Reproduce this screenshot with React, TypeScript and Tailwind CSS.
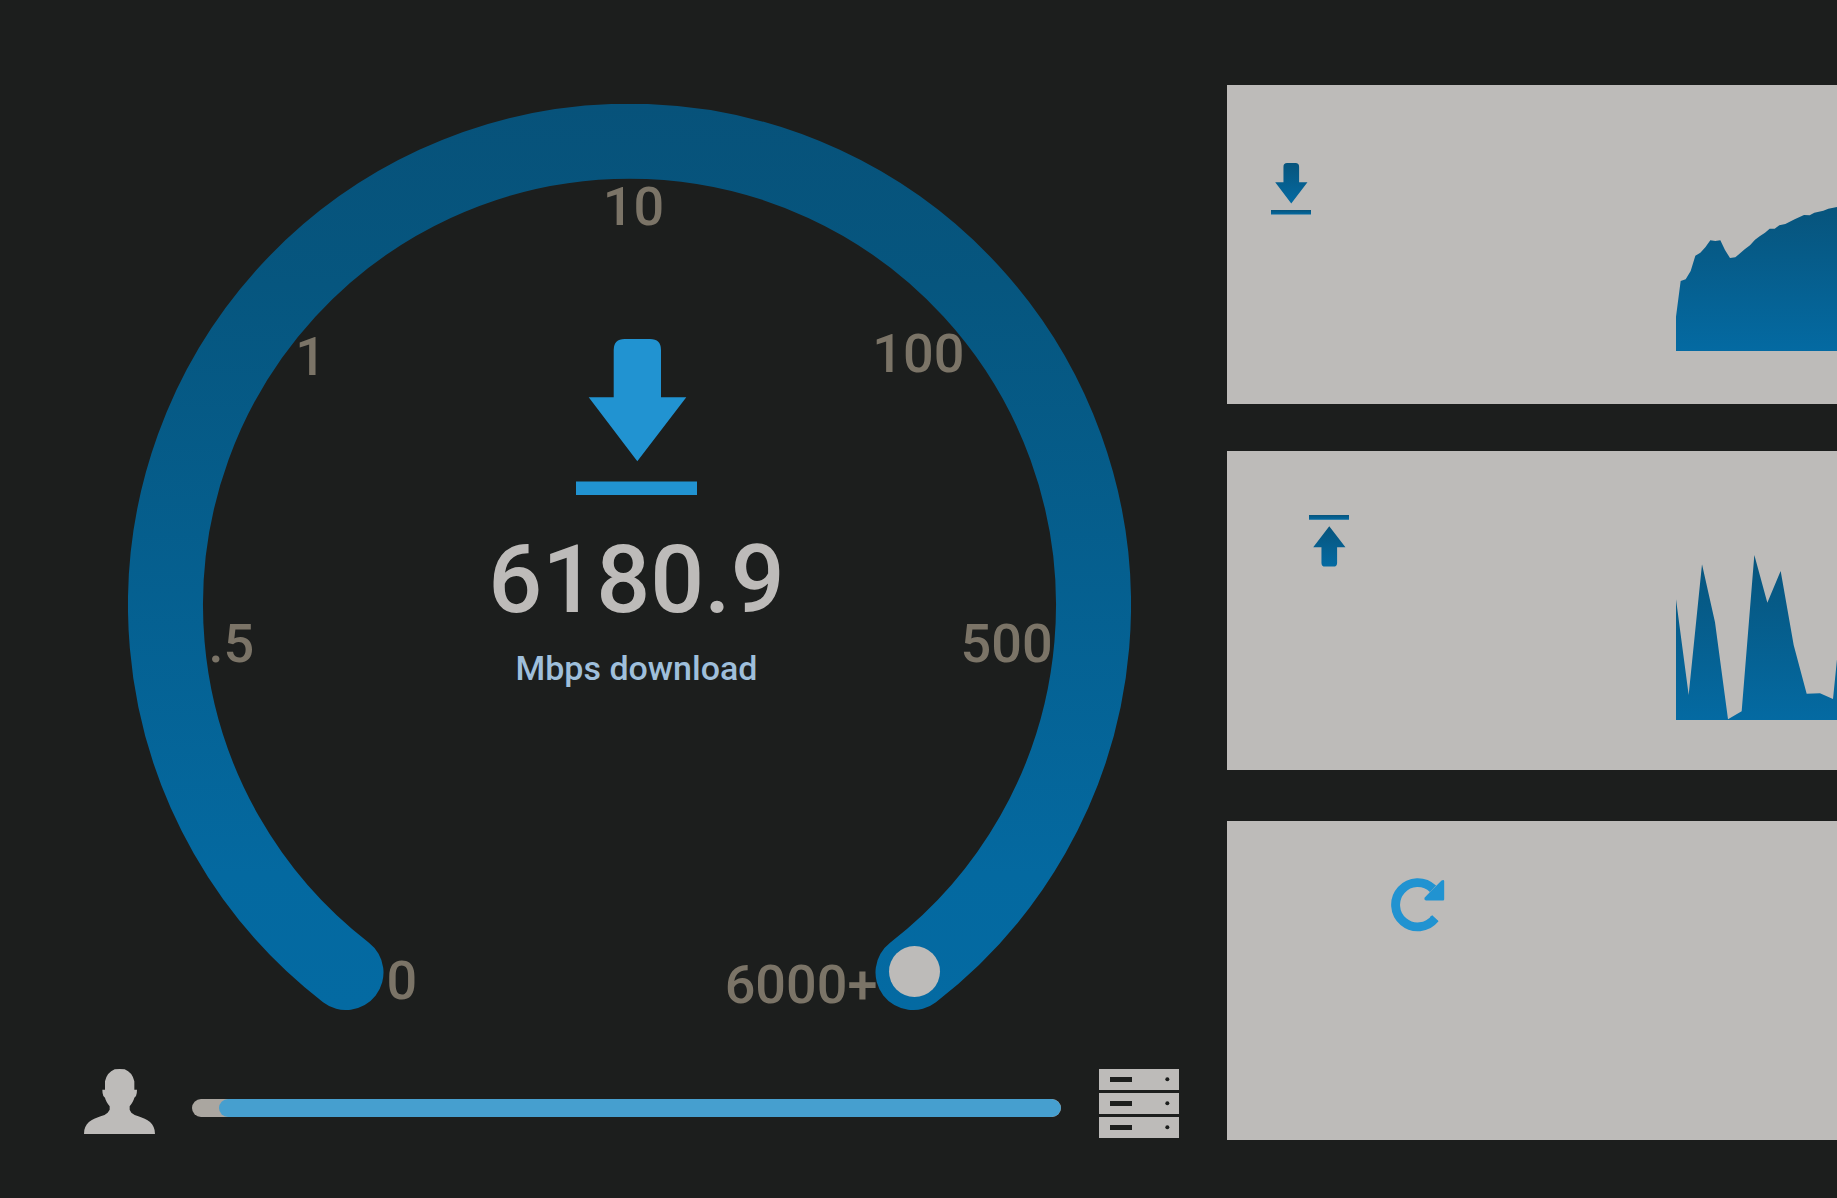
import React from "react";

type ArrowProps = { className: string; gradient?: string };

function ArrowIcon({ className, gradient }: ArrowProps) {
  const fill = gradient ? `url(#${gradient})` : "#2193d1";
  return (
    <svg viewBox="0 0 121 156" className={className} aria-hidden="true">
      {gradient && (
        <defs>
          <linearGradient id={gradient} x1="0" y1="0" x2="0" y2="1">
            <stop offset="0" stopColor="#07547c" />
            <stop offset="1" stopColor="#046aa2" />
          </linearGradient>
        </defs>
      )}
      <path
        d="M37.7 58.3V11Q37.7 0 48.7 0H74Q85 0 85 11V58.3H110.3L61.3 122.3L12.7 58.3Z"
        fill={fill}
      />
      <path d="M0 142.5H121V156H0Z" fill={fill} />
    </svg>
  );
}

function UploadIcon() {
  return (
    <svg viewBox="0 0 121 156" className="w-[40px]" aria-hidden="true">
      <defs>
        <linearGradient id="upload-icon" x1="0" y1="0" x2="0" y2="1">
          <stop offset="0" stopColor="#07547c" />
          <stop offset="1" stopColor="#046aa2" />
        </linearGradient>
      </defs>
      <path
        d="M37.7 97.7V145Q37.7 156 48.7 156H74Q85 156 85 145V97.7H110.3L61.3 33.7L12.7 97.7Z"
        fill="url(#upload-icon)"
      />
      <path d="M0 0H121V14H0Z" fill="url(#upload-icon)" />
    </svg>
  );
}

function RetryIcon() {
  return (
    <svg viewBox="0 0 54 54" className="size-[54px]" aria-hidden="true">
      <path
        d="M44 40.5A22.1 22.1 0 1 1 42 10.8"
        fill="none"
        stroke="#2193d1"
        strokeWidth="8.9"
      />
      <path
        d="M44.8 8.2L50.6 2.6Q53 1.2 53.2 3.4V21.2Q53.2 22.4 52 22.4H35Q32.4 21.6 34 19.2L39 14Z"
        fill="#2193d1"
      />
      <path d="M41.3 37.3L47.3 43L44 46L39 39Z" fill="#2193d1" />
    </svg>
  );
}

function PersonIcon() {
  return (
    <svg viewBox="0 0 213 195" className="w-[71px] shrink-0" role="img" aria-label="Client">
      <path
        d="M92 1Q107 -1 122 1Q145 10 151 37V62H159Q159 74 156 81L151 86Q149 96 137 112V122L142 131Q150 138 163 142C190 151 213 162 213 195H0C0 162 23 151 50 142Q64 138 71 131L77 122V112Q65 96 63 86L58 81Q55 74 55 62H63V37Q69 10 92 1Z"
        fill="#bdbbb9"
      />
    </svg>
  );
}

function ServerIcon() {
  return (
    <svg viewBox="0 0 240 207" className="w-[80px] shrink-0" role="img" aria-label="Server">
      {[0, 72, 144].map((y) => (
        <g key={y}>
          <rect x="0" y={y} width="240" height="63" fill="#bdbbb9" />
          <rect x="33" y={y + 24} width="66" height="15" fill="#1c1e1d" />
          <circle cx="205" cy={y + 31} r="6" fill="#1c1e1d" />
        </g>
      ))}
    </svg>
  );
}

type ChartProps = { id: string; points: string; height: number; className: string; label: string };

function AreaChart({ id, points, height, className, label }: ChartProps) {
  return (
    <svg viewBox={`0 0 483 ${height}`} className={className} role="img" aria-label={label}>
      <defs>
        <linearGradient id={id} x1="0" y1="0" x2="0" y2="1">
          <stop offset="0" stopColor="#07547c" />
          <stop offset="1" stopColor="#046aa2" />
        </linearGradient>
      </defs>
      <polygon points={points} fill={`url(#${id})`} />
    </svg>
  );
}

const downloadPoints =
  "0,432 0,329 14,222 29,217 44,192 58,146 73,137 88,121 103,100 118,102 133,100 147,129 162,153 178,151 207,126 222,115 237,98 252,87 267,77 281,65 296,65 310,55 328,51 356,37 384,24 401,25 415,17 442,11 457,5 483,0 483,432";

const uploadPoints =
  "0,495 0,133 38,420 78,28 117,202 156,493 197,469 235,0 274,143 314,48 353,270 392,416 432,415 471,432 483,313 483,495";

const ticks = [
  { text: "0", place: "left-[27.3%] top-[96.8%]" },
  { text: ".5", place: "left-[10.3%] top-[59.6%]" },
  { text: "1", place: "left-[18.2%] top-[27.9%]" },
  { text: "10", place: "left-[50.4%] top-[11.4%]" },
  { text: "100", place: "left-[78.8%] top-[27.6%]" },
  { text: "500", place: "left-[87.6%] top-[59.6%]" },
  { text: "6000+", place: "left-[67.1%] top-[97.2%]" },
];

function Gauge() {
  return (
    <section className="relative ml-[128px] mr-[96px]" aria-label="Speed gauge">
      <svg viewBox="0 0 1003 906" className="block w-full" aria-hidden="true">
        <defs>
          <linearGradient id="dial" gradientUnits="userSpaceOnUse" x1="0" y1="0" x2="0" y2="906">
            <stop offset="0" stopColor="#07527a" />
            <stop offset="0.2" stopColor="#06567f" />
            <stop offset="0.85" stopColor="#0469a0" />
            <stop offset="1" stopColor="#046aa2" />
          </linearGradient>
        </defs>
        <path
          d="M218 868.5A464 464 0 1 1 785 868.5"
          fill="none"
          stroke="url(#dial)"
          strokeWidth="75"
          strokeLinecap="round"
        />
        <circle cx="786.5" cy="867.5" r="25.5" fill="#bdbbb9" />
      </svg>
      {ticks.map((tick) => (
        <span
          key={tick.text}
          className={`absolute -translate-x-1/2 -translate-y-1/2 text-[54px] leading-none font-medium text-[#7b7467] ${tick.place}`}
        >
          {tick.text}
        </span>
      ))}
      <div className="absolute inset-x-0 top-[235px] flex flex-col items-center pl-[14px] font-medium">
        <ArrowIcon className="w-[121px]" />
        <p className="mt-[37px] text-[95px] leading-[96px] text-[#bdbbb9]">6180.9</p>
        <p className="mt-[20px] text-[34px] leading-[40px] text-[#9fbfdb]">Mbps download</p>
      </div>
    </section>
  );
}

export default function App() {
  return (
    <main className="grid min-h-screen grid-cols-[1227fr_610fr] overflow-hidden bg-[#1c1e1d] font-['Roboto',sans-serif]">
      <div className="min-w-0 pt-[104px]">
        <Gauge />
        <div className="mt-[59px] ml-[84px] mr-[48px] flex items-start">
          <PersonIcon />
          <div
            className="mr-[38px] ml-[37px] mt-[30px] flex h-[18px] flex-1 overflow-hidden rounded-full bg-[#aaa6a0] pl-[27px]"
            role="progressbar"
            aria-label="Test progress"
            aria-valuenow={97}
          >
            <div className="h-full flex-1 rounded-full bg-[#469fcf]" />
          </div>
          <ServerIcon />
        </div>
      </div>
      <div className="flex min-w-0 flex-col pt-[85px]">
        <section className="flex h-[319px] items-start justify-between bg-[#bdbbb9] pl-[44px] pt-[78px]">
          <ArrowIcon className="w-[40px]" gradient="download-icon" />
          <AreaChart
            id="download-area"
            points={downloadPoints}
            height={432}
            className="mt-[44px] w-[161px]"
            label="Download speed"
          />
        </section>
        <section className="mt-[47px] flex h-[319px] items-start justify-between bg-[#bdbbb9] pl-[82px] pt-[64px]">
          <UploadIcon />
          <AreaChart
            id="upload-area"
            points={uploadPoints}
            height={495}
            className="mt-[40px] w-[161px]"
            label="Upload speed"
          />
        </section>
        <section className="mt-[51px] h-[319px] bg-[#bdbbb9] pl-[164px] pt-[57px]">
          <button type="button" aria-label="Restart test" className="block">
            <RetryIcon />
          </button>
        </section>
      </div>
    </main>
  );
}
